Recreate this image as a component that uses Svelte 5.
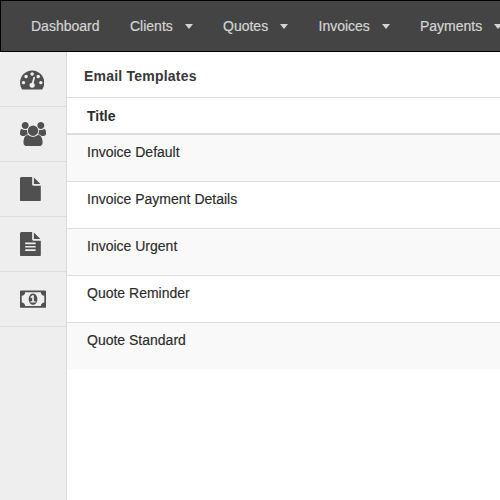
<script>
  const menu = [
    { label: 'Dashboard', width: 69, dropdown: false },
    { label: 'Clients', width: 43, dropdown: true },
    { label: 'Quotes', width: 45, dropdown: true },
    { label: 'Invoices', width: 51, dropdown: true },
    { label: 'Payments', width: 62, dropdown: true }
  ];

  const page = 'M1024 512v-472q22 14 36 28l408 408q14 14 28 36h-472zm-128 32q0 40 28 68t68 28h544v1056q0 40-28 68t-68 28h-1344q-40 0-68-28t-28-68v-1600q0-40 28-68t68-28h800v544z';

  const icons = [
    {
      name: 'Dashboard',
      width: 1792,
      path: 'M384 1152q0-53-37.5-90.5t-90.5-37.5-90.5 37.5-37.5 90.5 37.5 90.5 90.5 37.5 90.5-37.5 37.5-90.5zm192-448q0-53-37.5-90.5t-90.5-37.5-90.5 37.5-37.5 90.5 37.5 90.5 90.5 37.5 90.5-37.5 37.5-90.5zm428 481l101-382q6-26-7.5-48.5t-38.5-29.5-48 6.5-30 39.5l-101 382q-60 5-107 43.5t-63 98.5q-20 77 20 146t117 89 146-20 89-117q16-60-6-117t-72-91zm660-33q0-53-37.5-90.5t-90.5-37.5-90.5 37.5-37.5 90.5 37.5 90.5 90.5 37.5 90.5-37.5 37.5-90.5zm-640-640q0-53-37.5-90.5t-90.5-37.5-90.5 37.5-37.5 90.5 37.5 90.5 90.5 37.5 90.5-37.5 37.5-90.5zm448 192q0-53-37.5-90.5t-90.5-37.5-90.5 37.5-37.5 90.5 37.5 90.5 90.5 37.5 90.5-37.5 37.5-90.5zm320 448q0 261-141 483-19 29-54 29h-1402q-35 0-54-29-141-221-141-483 0-182 71-348t191-286 286-191 348-71 348 71 286 191 191 286 71 348z'
    },
    {
      name: 'Clients',
      width: 1920,
      path: 'M593 896q-162 5-265 128h-134q-82 0-138-40.5t-56-118.5q0-353 124-353 6 0 43.5 21t97.5 42.5 119 21.5q67 0 133-23-5 37-5 66 0 139 81 256zm1071 637q0 120-73 189.5t-194 69.5h-874q-121 0-194-69.5t-73-189.5q0-53 3.5-103.5t14-109 26.5-108.5 43-97.5 62-81 85.5-53.5 111.5-20q10 0 43 21.5t73 48 107 48 135 21.5 135-21.5 107-48 73-48 43-21.5q61 0 111.5 20t85.5 53.5 62 81 43 97.5 26.5 108.5 14 109 3.5 103.5zm-1024-1277q0 106-75 181t-181 75-181-75-75-181 75-181 181-75 181 75 75 181zm704 384q0 159-112.5 271.5t-271.5 112.5-271.5-112.5-112.5-271.5 112.5-271.5 271.5-112.5 271.5 112.5 112.5 271.5zm576 225q0 78-56 118.5t-138 40.5h-134q-103-123-265-128 81-117 81-256 0-29-5-66 66 23 133 23 59 0 119-21.5t97.5-42.5 43.5-21q124 0 124 353zm-128-609q0 106-75 181t-181 75-181-75-75-181 75-181 181-75 181 75 75 181z'
    },
    { name: 'Quotes', width: 1536, path: page },
    {
      name: 'Invoices',
      width: 1536,
      path: page + 'M384 768h768v128h-768zM384 1024h768v128h-768zM384 1280h768v128h-768z'
    },
    {
      name: 'Payments',
      width: 1920,
      path: 'M768 1152h384v-96h-128v-448h-114l-148 137 77 80q42-37 55-57h2v288h-128v96zm512-256q0 70-21 142t-59.5 134-101.5 101-138 39-138-39-101.5-101-59.5-134-21-142 21-142 59.5-134 101.5-101 138-39 138 39 101.5 101 59.5 134 21 142zm512 256v-512q-106 0-181-75t-75-181h-1152q0 106-75 181t-181 75v512q106 0 181 75t75 181h1152q0-106 75-181t181-75zm128-832v1152q0 26-19 45t-45 19h-1792q-26 0-45-19t-19-45v-1152q0-26 19-45t45-19h1792q26 0 45 19t19 45z'
    }
  ];

  const templates = ['Invoice Default', 'Invoice Payment Details', 'Invoice Urgent', 'Quote Reminder', 'Quote Standard'];
</script>

<div class="app">
  <nav class="navbar">
    {#each menu as item}
      <div class="item">
        <span class="label" style="width: {item.width}px">{item.label}</span>
        {#if item.dropdown}<span class="caret"></span>{/if}
      </div>
    {/each}
  </nav>
  <div class="body">
    <aside class="sidebar">
      {#each icons as icon}
        <div class="cell">
          <svg viewBox="0 0 {icon.width} 1792" width={(icon.width * 24.3) / 1792} height="24.3" role="img" aria-label={icon.name}>
            <path d={icon.path} fill-rule="evenodd" />
          </svg>
        </div>
      {/each}
    </aside>
    <main>
      <h1>Email Templates</h1>
      <div class="head">Title</div>
      {#each templates as template}
        <div class="row">{template}</div>
      {/each}
    </main>
  </div>
</div>

<style>
  :global(body) {
    margin: 0;
    overflow: hidden;
  }
  .app {
    width: 500px;
    height: 500px;
    display: flex;
    flex-direction: column;
    overflow: hidden;
    background: #fff;
    color: #2b2b2b;
    font: 14px/20px 'Liberation Sans', Arial, sans-serif;
  }
  .navbar {
    box-sizing: border-box;
    height: 52px;
    flex: none;
    display: flex;
    gap: 30px;
    padding-left: 30px;
    overflow: hidden;
    background: #444;
    border: 1px solid #000;
    border-right: 0;
    color: #d4d4d4;
  }
  .item {
    display: flex;
    align-items: center;
    gap: 12px;
    flex: none;
  }
  .item:nth-child(n + 3) {
    margin-right: 0.5px;
  }
  .label {
    white-space: nowrap;
    -webkit-text-stroke: 0.2px currentColor;
  }
  .caret {
    border: 4.5px solid transparent;
    border-width: 5px 4.5px 0;
    border-top-color: #d4d4d4;
    width: 1px;
    box-sizing: border-box;
  }
  .body {
    flex: 1;
    display: flex;
  }
  .sidebar {
    width: 66px;
    flex: none;
    background: #eee;
    border-right: 1px solid #d9d9d9;
  }
  .cell {
    box-sizing: border-box;
    height: 55px;
    padding: 15px 0 0 20px;
    border-bottom: 1px solid #dcdcdc;
  }
  svg {
    display: block;
    fill: #505050;
  }
  main {
    flex: 1;
  }
  h1 {
    margin: 0;
    height: 31px;
    padding: 14px 0 0 17px;
    border-bottom: 1px solid #ddd;
    font-size: 14px;
    line-height: 20px;
    font-weight: bold;
    letter-spacing: 0.22px;
    color: #383838;
  }
  .head {
    height: 27px;
    padding: 8px 0 0 20px;
    border-bottom: 2px solid #ddd;
    font-weight: bold;
  }
  .row {
    box-sizing: border-box;
    height: 47px;
    padding: 7px 0 0 20px;
    border-top: 1px solid #ddd;
    -webkit-text-stroke: 0.15px currentColor;
  }
  .head + .row {
    height: 46px;
    border-top: 0;
  }
  .row:nth-child(odd) {
    background: #f9f9f9;
  }
</style>
